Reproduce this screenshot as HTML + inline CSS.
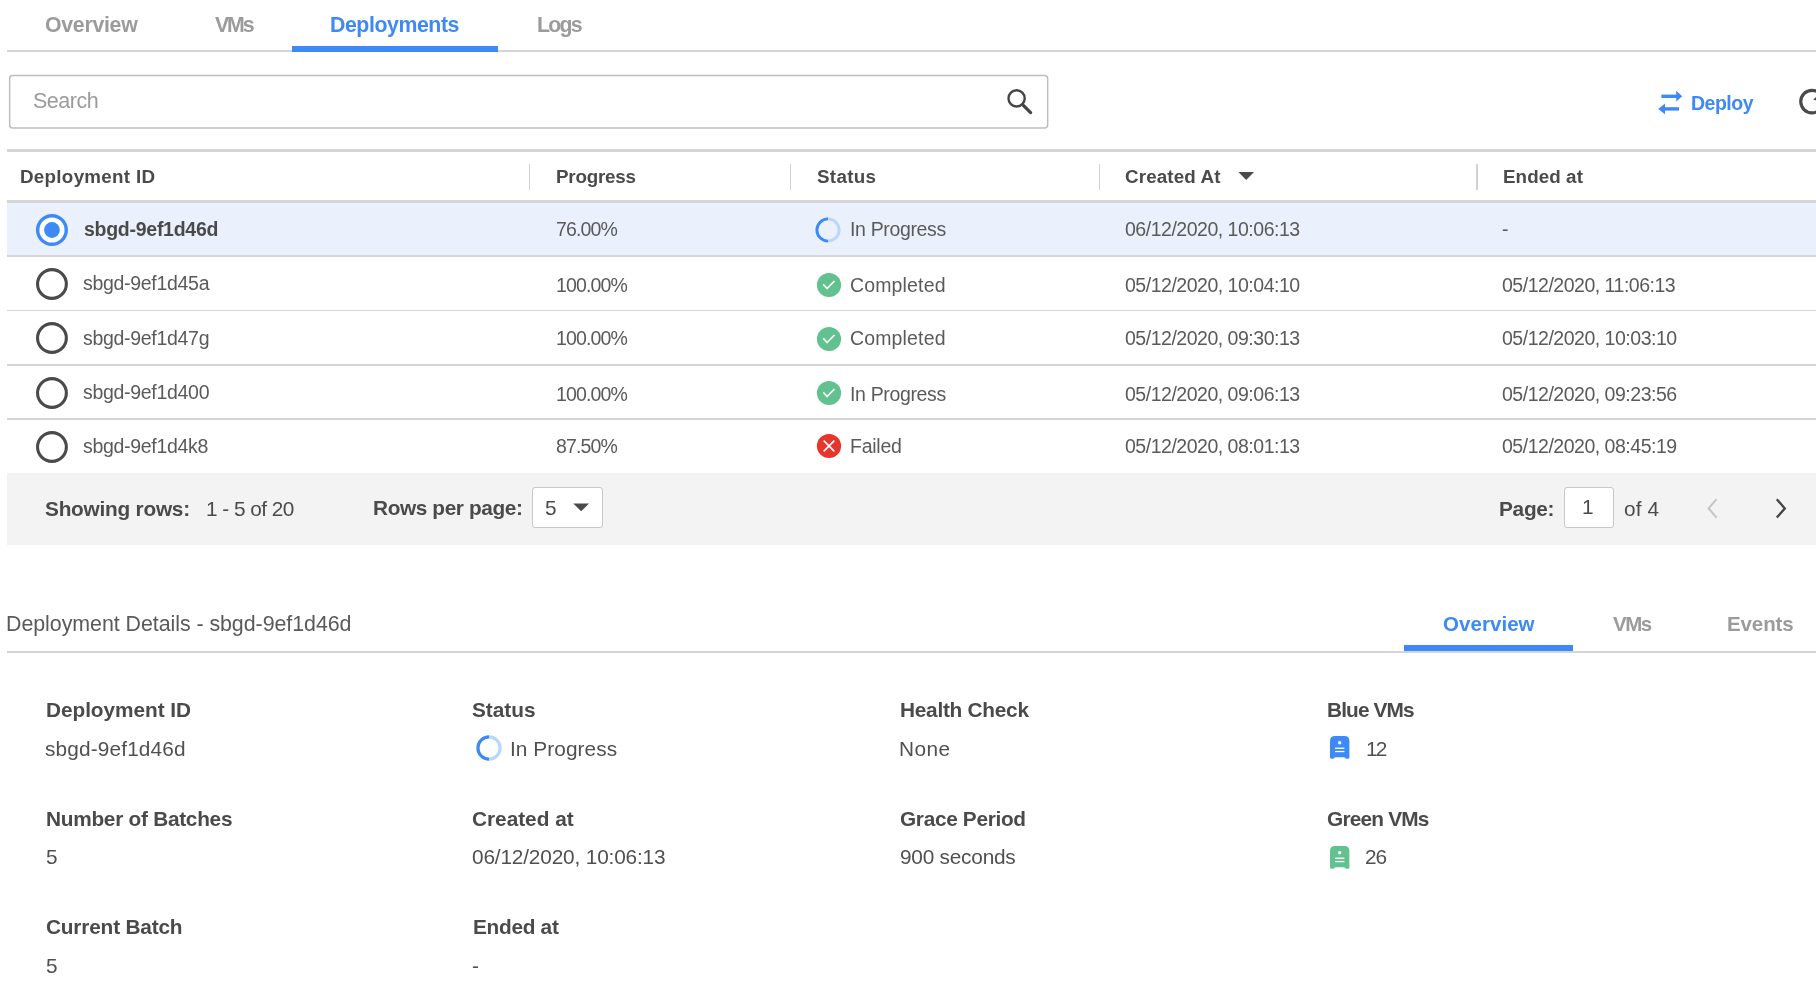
<!DOCTYPE html>
<html><head><meta charset="utf-8"><style>
html,body{margin:0;padding:0;background:#fff;width:1816px;height:992px;overflow:hidden;position:relative}
body{font-family:"Liberation Sans",sans-serif}
.t{position:absolute;line-height:1;white-space:nowrap;margin:0;will-change:transform}
.bm{display:inline-block;width:0;height:0;vertical-align:baseline}
.r{position:absolute;box-sizing:content-box}
svg.r{overflow:visible}
</style></head><body>
<div class="r" style="left:7px;top:50px;width:1809px;height:2px;background:#d4d5d8;"></div><div class="r" style="left:292px;top:46px;width:206px;height:6px;background:#3d8af7;"></div><svg class="r" style="left:0px;top:60px" width="1060" height="80" viewBox="0 60 1060 80"><rect x="9.65" y="75.6" width="1038" height="52.3" rx="3" fill="#fff" stroke="#bebebe" stroke-width="1.5"/></svg><svg class="r" style="left:995px;top:80px" width="45" height="45" viewBox="995 80 45 45"><circle cx="1016.6" cy="98.4" r="8.1" fill="none" stroke="#444" stroke-width="2.4"/><line x1="1022.6" y1="104.6" x2="1030.6" y2="112.6" stroke="#444" stroke-width="3.2" stroke-linecap="round"/></svg><svg class="r" style="left:1650px;top:85px" width="40" height="35" viewBox="1650 85 40 35"><rect x="1661.4" y="94.6" width="16" height="3.4" fill="#3d8af7"/><polygon points="1676.2,90.8 1682.2,96.3 1676.2,101.6" fill="#3d8af7"/><rect x="1664.2" y="107.2" width="14.8" height="3.4" fill="#3d8af7"/><polygon points="1665,103.4 1658.2,108.9 1665,114.3" fill="#3d8af7"/></svg><svg class="r" style="left:1790px;top:80px" width="26" height="45" viewBox="1790 80 26 45"><circle cx="1812" cy="101.6" r="11.25" fill="none" stroke="#4a4a4a" stroke-width="3.2"/><polygon points="1813.3,99.6 1817,96 1817,101" fill="#4a4a4a"/></svg><svg class="r" style="left:1235px;top:168px" width="24" height="16" viewBox="1235 168 24 16"><polygon points="1238.4,172 1254,172 1246.2,179.9" fill="#4a4a4a"/></svg><div class="r" style="left:7px;top:149.2px;width:1809px;height:3px;background:#d4d5d8;"></div><div class="r" style="left:528.5px;top:164px;width:1.5px;height:26px;background:#d0d1d5;"></div><div class="r" style="left:789.5px;top:164px;width:1.5px;height:26px;background:#d0d1d5;"></div><div class="r" style="left:1098.5px;top:164px;width:1.5px;height:26px;background:#d0d1d5;"></div><div class="r" style="left:1476.0px;top:164px;width:1.5px;height:26px;background:#d0d1d5;"></div><div class="r" style="left:7px;top:202.6px;width:1809px;height:53px;background:#eaf1fd;"></div><div class="r" style="left:7px;top:200px;width:1809px;height:2.8px;background:#d4d5d8;"></div><div class="r" style="left:7px;top:255px;width:1809px;height:1.8px;background:#d4d5d8;"></div><div class="r" style="left:7px;top:309.5px;width:1809px;height:1.6px;background:#d4d5d8;"></div><div class="r" style="left:7px;top:364px;width:1809px;height:1.6px;background:#d4d5d8;"></div><div class="r" style="left:7px;top:418.3px;width:1809px;height:1.6px;background:#d4d5d8;"></div><div class="r" style="left:7px;top:472.5px;width:1809px;height:72px;background:#f3f3f3;"></div><div class="r" style="left:532.2px;top:487.4px;width:69.2px;height:38.3px;border:1px solid #c8c8c8;border-radius:3px;background:#fff"></div><svg class="r" style="left:570px;top:500px" width="22" height="14" viewBox="570 500 22 14"><polygon points="573.3,503.6 589,503.6 581.15,511.3" fill="#4a4a4a"/></svg><div class="r" style="left:1564.2px;top:487.4px;width:47.4px;height:38.3px;border:1px solid #c8c8c8;border-radius:3px;background:#fff"></div><svg class="r" style="left:1700px;top:494px" width="95" height="30" viewBox="1700 494 95 30"><polyline points="1716.6,499.2 1708.6,508.4 1716.6,517.6" fill="none" stroke="#c4c4c4" stroke-width="2"/><polyline points="1776.8,499.2 1784.8,508.4 1776.8,517.6" fill="none" stroke="#444" stroke-width="2.3"/></svg><svg class="r" style="left:30px;top:207.5px" width="44" height="44" viewBox="30 207.5 44 44"><circle cx="51.95" cy="229.5" r="14.3" fill="#fff" stroke="#3d8af7" stroke-width="3.4"/><circle cx="51.95" cy="229.5" r="7.9" fill="#3d8af7"/></svg><svg class="r" style="left:30px;top:261.85px" width="44" height="44" viewBox="30 261.85 44 44"><circle cx="51.95" cy="283.85" r="14.4" fill="none" stroke="#4a4a4a" stroke-width="3.1"/></svg><svg class="r" style="left:30px;top:316.2px" width="44" height="44" viewBox="30 316.2 44 44"><circle cx="51.95" cy="338.2" r="14.4" fill="none" stroke="#4a4a4a" stroke-width="3.1"/></svg><svg class="r" style="left:30px;top:370.9px" width="44" height="44" viewBox="30 370.9 44 44"><circle cx="51.95" cy="392.9" r="14.4" fill="none" stroke="#4a4a4a" stroke-width="3.1"/></svg><svg class="r" style="left:30px;top:425.0px" width="44" height="44" viewBox="30 425.0 44 44"><circle cx="51.95" cy="447.0" r="14.4" fill="none" stroke="#4a4a4a" stroke-width="3.1"/></svg><svg class="r" style="left:811.8px;top:213.5px" width="32" height="32" viewBox="811.8 213.5 32 32"><path d="M 827.8 218.4 A 11.1 11.1 0 0 1 827.8 240.6" fill="none" stroke="#b9d6fc" stroke-width="2.9"/><path d="M 827.8 240.6 A 11.1 11.1 0 0 1 827.8 218.4" fill="none" stroke="#3d8af7" stroke-width="2.9"/></svg><svg class="r" style="left:812.7px;top:268.85px" width="32" height="32" viewBox="812.7 268.85 32 32"><circle cx="828.7" cy="284.85" r="12.1" fill="#62c28f"/><polyline points="823.5,284.75 826.8000000000001,288.35 833.7,281.35" fill="none" stroke="#fff" stroke-width="1.7" stroke-linecap="round" stroke-linejoin="round"/></svg><svg class="r" style="left:812.7px;top:323.0px" width="32" height="32" viewBox="812.7 323.0 32 32"><circle cx="828.7" cy="339.0" r="12.1" fill="#62c28f"/><polyline points="823.5,338.9 826.8000000000001,342.5 833.7,335.5" fill="none" stroke="#fff" stroke-width="1.7" stroke-linecap="round" stroke-linejoin="round"/></svg><svg class="r" style="left:812.7px;top:377.3px" width="32" height="32" viewBox="812.7 377.3 32 32"><circle cx="828.7" cy="393.3" r="12.1" fill="#62c28f"/><polyline points="823.5,393.2 826.8000000000001,396.8 833.7,389.8" fill="none" stroke="#fff" stroke-width="1.7" stroke-linecap="round" stroke-linejoin="round"/></svg><svg class="r" style="left:812.5px;top:429.9px" width="32" height="32" viewBox="812.5 429.9 32 32"><circle cx="828.5" cy="445.9" r="12.1" fill="#e8342a"/><path d="M 823.7 441.09999999999997 L 833.3 450.7 M 833.3 441.09999999999997 L 823.7 450.7" fill="none" stroke="#fff" stroke-width="1.7" stroke-linecap="round"/></svg><div class="r" style="left:7px;top:651.2px;width:1809px;height:2px;background:#d4d5d8;"></div><div class="r" style="left:1404px;top:645.3px;width:169px;height:6px;background:#3d8af7;"></div><svg class="r" style="left:472.5px;top:731.5px" width="32" height="32" viewBox="472.5 731.5 32 32"><path d="M 488.5 736.4 A 11.1 11.1 0 0 1 488.5 758.6" fill="none" stroke="#b9d6fc" stroke-width="3.2"/><path d="M 488.5 758.6 A 11.1 11.1 0 0 1 488.5 736.4" fill="none" stroke="#3d8af7" stroke-width="3.2"/></svg><svg class="r" style="left:1330.1px;top:736px" width="19.4" height="22.7" viewBox="0 0 19.4 22.7"><path d="M 0 5 Q 0 0 5 0 L 14.4 0 Q 19.4 0 19.4 5 L 19.4 21.2 Q 19.4 22.7 17.9 22.7 L 16.4 22.7 Q 15.4 22.7 15 21.7 Q 14.6 21.2 13.6 21.2 L 5.8 21.2 Q 4.8 21.2 4.4 21.7 Q 4 22.7 3 22.7 L 1.5 22.7 Q 0 22.7 0 21.2 Z" fill="#3d8af7"/><circle cx="9.7" cy="6.7" r="1.7" fill="#fff"/><rect x="5" y="11.6" width="9.4" height="1.3" fill="#fff"/><rect x="5" y="14.9" width="9.4" height="1.3" fill="#fff"/></svg><svg class="r" style="left:1330.1px;top:846.4px" width="19.4" height="22.7" viewBox="0 0 19.4 22.7"><path d="M 0 5 Q 0 0 5 0 L 14.4 0 Q 19.4 0 19.4 5 L 19.4 21.2 Q 19.4 22.7 17.9 22.7 L 16.4 22.7 Q 15.4 22.7 15 21.7 Q 14.6 21.2 13.6 21.2 L 5.8 21.2 Q 4.8 21.2 4.4 21.7 Q 4 22.7 3 22.7 L 1.5 22.7 Q 0 22.7 0 21.2 Z" fill="#62c28f"/><circle cx="9.7" cy="6.7" r="1.7" fill="#fff"/><rect x="5" y="11.6" width="9.4" height="1.3" fill="#fff"/><rect x="5" y="14.9" width="9.4" height="1.3" fill="#fff"/></svg>
<div id="tab1" class="t" style="left:45.40px;top:15.21px;font-size:21.3px;font-weight:700;color:#9b9b9b;letter-spacing:-0.286px">Overview<i class="bm"></i></div>
<div id="tab2" class="t" style="left:215.00px;top:15.21px;font-size:21.3px;font-weight:700;color:#9b9b9b;letter-spacing:-2.100px">VMs<i class="bm"></i></div>
<div id="tab3" class="t" style="left:330.40px;top:15.00px;font-size:21.3px;font-weight:700;color:#3d8af7;letter-spacing:-0.430px">Deployments<i class="bm"></i></div>
<div id="tab4" class="t" style="left:536.80px;top:15.00px;font-size:21.3px;font-weight:700;color:#9b9b9b;letter-spacing:-1.767px">Logs<i class="bm"></i></div>
<div id="search" class="t" style="left:32.70px;top:91.41px;font-size:21.5px;font-weight:400;color:#9b9b9b;letter-spacing:-0.480px">Search<i class="bm"></i></div>
<div id="deploy" class="t" style="left:1690.80px;top:94.11px;font-size:19.5px;font-weight:700;color:#3d8af7;letter-spacing:-0.500px">Deploy<i class="bm"></i></div>
<div id="h1" class="t" style="left:19.80px;top:168.01px;font-size:18.8px;font-weight:700;color:#4a4a4a;letter-spacing:0.292px">Deployment ID<i class="bm"></i></div>
<div id="h2" class="t" style="left:555.80px;top:168.01px;font-size:18.8px;font-weight:700;color:#4a4a4a;letter-spacing:-0.200px">Progress<i class="bm"></i></div>
<div id="h3" class="t" style="left:816.60px;top:168.01px;font-size:18.8px;font-weight:700;color:#4a4a4a;letter-spacing:0.300px">Status<i class="bm"></i></div>
<div id="h4" class="t" style="left:1125.00px;top:167.72px;font-size:18.8px;font-weight:700;color:#4a4a4a;letter-spacing:0.144px">Created At<i class="bm"></i></div>
<div id="h5" class="t" style="left:1503.20px;top:168.01px;font-size:18.8px;font-weight:700;color:#4a4a4a;letter-spacing:0.086px">Ended at<i class="bm"></i></div>
<div id="r0a" class="t" style="left:83.50px;top:219.91px;font-size:19.5px;font-weight:700;color:#4a4a4a;letter-spacing:-0.267px">sbgd-9ef1d46d<i class="bm"></i></div>
<div id="r0b" class="t" style="left:555.60px;top:219.91px;font-size:19.5px;font-weight:400;color:#5a5a5a;letter-spacing:-0.850px">76.00%<i class="bm"></i></div>
<div id="r0c" class="t" style="left:849.80px;top:219.91px;font-size:19.5px;font-weight:400;color:#5a5a5a;letter-spacing:-0.350px">In Progress<i class="bm"></i></div>
<div id="r0d" class="t" style="left:1124.70px;top:219.91px;font-size:19.5px;font-weight:400;color:#5a5a5a;letter-spacing:-0.484px">06/12/2020, 10:06:13<i class="bm"></i></div>
<div id="r0e" class="t" style="left:1502.00px;top:219.91px;font-size:19.5px;font-weight:400;color:#5a5a5a;letter-spacing:-0.484px">-<i class="bm"></i></div>
<div id="r1a" class="t" style="left:83.00px;top:273.81px;font-size:19.5px;font-weight:400;color:#5a5a5a;letter-spacing:-0.300px">sbgd-9ef1d45a<i class="bm"></i></div>
<div id="r1b" class="t" style="left:555.60px;top:276.01px;font-size:19.5px;font-weight:400;color:#5a5a5a;letter-spacing:-0.850px">100.00%<i class="bm"></i></div>
<div id="r1c" class="t" style="left:849.70px;top:276.01px;font-size:19.5px;font-weight:400;color:#5a5a5a;letter-spacing:0.150px">Completed<i class="bm"></i></div>
<div id="r1d" class="t" style="left:1124.70px;top:276.01px;font-size:19.5px;font-weight:400;color:#5a5a5a;letter-spacing:-0.484px">05/12/2020, 10:04:10<i class="bm"></i></div>
<div id="r1e" class="t" style="left:1502.40px;top:276.01px;font-size:19.5px;font-weight:400;color:#5a5a5a;letter-spacing:-0.484px">05/12/2020, 11:06:13<i class="bm"></i></div>
<div id="r2a" class="t" style="left:83.00px;top:328.91px;font-size:19.5px;font-weight:400;color:#5a5a5a;letter-spacing:-0.300px">sbgd-9ef1d47g<i class="bm"></i></div>
<div id="r2b" class="t" style="left:555.60px;top:328.91px;font-size:19.5px;font-weight:400;color:#5a5a5a;letter-spacing:-0.850px">100.00%<i class="bm"></i></div>
<div id="r2c" class="t" style="left:849.70px;top:328.91px;font-size:19.5px;font-weight:400;color:#5a5a5a;letter-spacing:0.150px">Completed<i class="bm"></i></div>
<div id="r2d" class="t" style="left:1124.70px;top:328.91px;font-size:19.5px;font-weight:400;color:#5a5a5a;letter-spacing:-0.484px">05/12/2020, 09:30:13<i class="bm"></i></div>
<div id="r2e" class="t" style="left:1502.40px;top:328.91px;font-size:19.5px;font-weight:400;color:#5a5a5a;letter-spacing:-0.484px">05/12/2020, 10:03:10<i class="bm"></i></div>
<div id="r3a" class="t" style="left:83.00px;top:382.81px;font-size:19.5px;font-weight:400;color:#5a5a5a;letter-spacing:-0.300px">sbgd-9ef1d400<i class="bm"></i></div>
<div id="r3b" class="t" style="left:555.60px;top:384.51px;font-size:19.5px;font-weight:400;color:#5a5a5a;letter-spacing:-0.850px">100.00%<i class="bm"></i></div>
<div id="r3c" class="t" style="left:849.80px;top:384.51px;font-size:19.5px;font-weight:400;color:#5a5a5a;letter-spacing:-0.350px">In Progress<i class="bm"></i></div>
<div id="r3d" class="t" style="left:1124.70px;top:384.51px;font-size:19.5px;font-weight:400;color:#5a5a5a;letter-spacing:-0.484px">05/12/2020, 09:06:13<i class="bm"></i></div>
<div id="r3e" class="t" style="left:1502.40px;top:384.51px;font-size:19.5px;font-weight:400;color:#5a5a5a;letter-spacing:-0.484px">05/12/2020, 09:23:56<i class="bm"></i></div>
<div id="r4a" class="t" style="left:83.00px;top:437.20px;font-size:19.5px;font-weight:400;color:#5a5a5a;letter-spacing:-0.300px">sbgd-9ef1d4k8<i class="bm"></i></div>
<div id="r4b" class="t" style="left:555.60px;top:437.41px;font-size:19.5px;font-weight:400;color:#5a5a5a;letter-spacing:-0.850px">87.50%<i class="bm"></i></div>
<div id="r4c" class="t" style="left:850.40px;top:437.41px;font-size:19.5px;font-weight:400;color:#5a5a5a;letter-spacing:-0.260px">Failed<i class="bm"></i></div>
<div id="r4d" class="t" style="left:1124.70px;top:437.41px;font-size:19.5px;font-weight:400;color:#5a5a5a;letter-spacing:-0.484px">05/12/2020, 08:01:13<i class="bm"></i></div>
<div id="r4e" class="t" style="left:1502.40px;top:437.41px;font-size:19.5px;font-weight:400;color:#5a5a5a;letter-spacing:-0.484px">05/12/2020, 08:45:19<i class="bm"></i></div>
<div id="f1" class="t" style="left:44.60px;top:498.81px;font-size:20.8px;font-weight:700;color:#4a4a4a;letter-spacing:-0.233px">Showing rows:<i class="bm"></i></div>
<div id="f2" class="t" style="left:206.20px;top:498.81px;font-size:20.8px;font-weight:400;color:#4a4a4a;letter-spacing:-0.540px">1 - 5 of 20<i class="bm"></i></div>
<div id="f3" class="t" style="left:373.20px;top:498.41px;font-size:20.8px;font-weight:700;color:#4a4a4a;letter-spacing:-0.385px">Rows per page:<i class="bm"></i></div>
<div id="f4" class="t" style="left:544.70px;top:498.10px;font-size:20.8px;font-weight:400;color:#4a4a4a;letter-spacing:0.000px">5<i class="bm"></i></div>
<div id="f5" class="t" style="left:1498.60px;top:498.50px;font-size:20.8px;font-weight:700;color:#4a4a4a;letter-spacing:-0.275px">Page:<i class="bm"></i></div>
<div id="f6" class="t" style="left:1582.40px;top:497.21px;font-size:20.8px;font-weight:400;color:#4a4a4a;letter-spacing:0.000px">1<i class="bm"></i></div>
<div id="f7" class="t" style="left:1624.30px;top:498.50px;font-size:20.8px;font-weight:400;color:#4a4a4a;letter-spacing:0.133px">of 4<i class="bm"></i></div>
<div id="dt" class="t" style="left:5.60px;top:614.11px;font-size:21.4px;font-weight:400;color:#5a5a5a;letter-spacing:-0.052px">Deployment Details - sbgd-9ef1d46d<i class="bm"></i></div>
<div id="dtab1" class="t" style="left:1442.50px;top:614.22px;font-size:20.5px;font-weight:700;color:#3d8af7;letter-spacing:0.057px">Overview<i class="bm"></i></div>
<div id="dtab2" class="t" style="left:1612.60px;top:614.22px;font-size:20.5px;font-weight:700;color:#9b9b9b;letter-spacing:-1.500px">VMs<i class="bm"></i></div>
<div id="dtab3" class="t" style="left:1726.70px;top:614.22px;font-size:20.5px;font-weight:700;color:#9b9b9b;letter-spacing:-0.100px">Events<i class="bm"></i></div>
<div id="l00" class="t" style="left:45.50px;top:700.00px;font-size:20.8px;font-weight:700;color:#4a4a4a;letter-spacing:-0.050px">Deployment ID<i class="bm"></i></div>
<div id="l01" class="t" style="left:472.40px;top:700.00px;font-size:20.8px;font-weight:700;color:#4a4a4a;letter-spacing:0.000px">Status<i class="bm"></i></div>
<div id="l02" class="t" style="left:900.40px;top:700.00px;font-size:20.8px;font-weight:700;color:#4a4a4a;letter-spacing:-0.255px">Health Check<i class="bm"></i></div>
<div id="l03" class="t" style="left:1327.30px;top:700.00px;font-size:20.8px;font-weight:700;color:#4a4a4a;letter-spacing:-0.871px">Blue VMs<i class="bm"></i></div>
<div id="l10" class="t" style="left:45.50px;top:808.81px;font-size:20.8px;font-weight:700;color:#4a4a4a;letter-spacing:-0.263px">Number of Batches<i class="bm"></i></div>
<div id="l11" class="t" style="left:472.40px;top:808.81px;font-size:20.8px;font-weight:700;color:#4a4a4a;letter-spacing:-0.011px">Created at<i class="bm"></i></div>
<div id="l12" class="t" style="left:899.60px;top:808.81px;font-size:20.8px;font-weight:700;color:#4a4a4a;letter-spacing:-0.318px">Grace Period<i class="bm"></i></div>
<div id="l13" class="t" style="left:1327.00px;top:808.81px;font-size:20.8px;font-weight:700;color:#4a4a4a;letter-spacing:-0.787px">Green VMs<i class="bm"></i></div>
<div id="l20" class="t" style="left:45.50px;top:917.31px;font-size:20.8px;font-weight:700;color:#4a4a4a;letter-spacing:-0.175px">Current Batch<i class="bm"></i></div>
<div id="l21" class="t" style="left:472.80px;top:917.31px;font-size:20.8px;font-weight:700;color:#4a4a4a;letter-spacing:-0.286px">Ended at<i class="bm"></i></div>
<div id="v00" class="t" style="left:45.30px;top:738.50px;font-size:20.8px;font-weight:400;color:#505050;letter-spacing:0.150px">sbgd-9ef1d46d<i class="bm"></i></div>
<div id="v01" class="t" style="left:510.30px;top:738.50px;font-size:20.8px;font-weight:400;color:#505050;letter-spacing:0.070px">In Progress<i class="bm"></i></div>
<div id="v02" class="t" style="left:899.40px;top:738.50px;font-size:20.8px;font-weight:400;color:#505050;letter-spacing:0.467px">None<i class="bm"></i></div>
<div id="v03" class="t" style="left:1365.60px;top:738.50px;font-size:20.8px;font-weight:400;color:#505050;letter-spacing:-1.900px">12<i class="bm"></i></div>
<div id="v10" class="t" style="left:45.50px;top:847.10px;font-size:20.8px;font-weight:400;color:#505050;letter-spacing:0.000px">5<i class="bm"></i></div>
<div id="v11" class="t" style="left:472.40px;top:847.10px;font-size:20.8px;font-weight:400;color:#505050;letter-spacing:-0.158px">06/12/2020, 10:06:13<i class="bm"></i></div>
<div id="v12" class="t" style="left:899.60px;top:847.10px;font-size:20.8px;font-weight:400;color:#505050;letter-spacing:-0.220px">900 seconds<i class="bm"></i></div>
<div id="v13" class="t" style="left:1365.00px;top:847.10px;font-size:20.8px;font-weight:400;color:#505050;letter-spacing:-1.000px">26<i class="bm"></i></div>
<div id="v20" class="t" style="left:45.50px;top:955.71px;font-size:20.8px;font-weight:400;color:#505050;letter-spacing:0.000px">5<i class="bm"></i></div>
<div id="v21" class="t" style="left:472.30px;top:955.71px;font-size:20.8px;font-weight:400;color:#505050;letter-spacing:0.000px">-<i class="bm"></i></div>
</body></html>
